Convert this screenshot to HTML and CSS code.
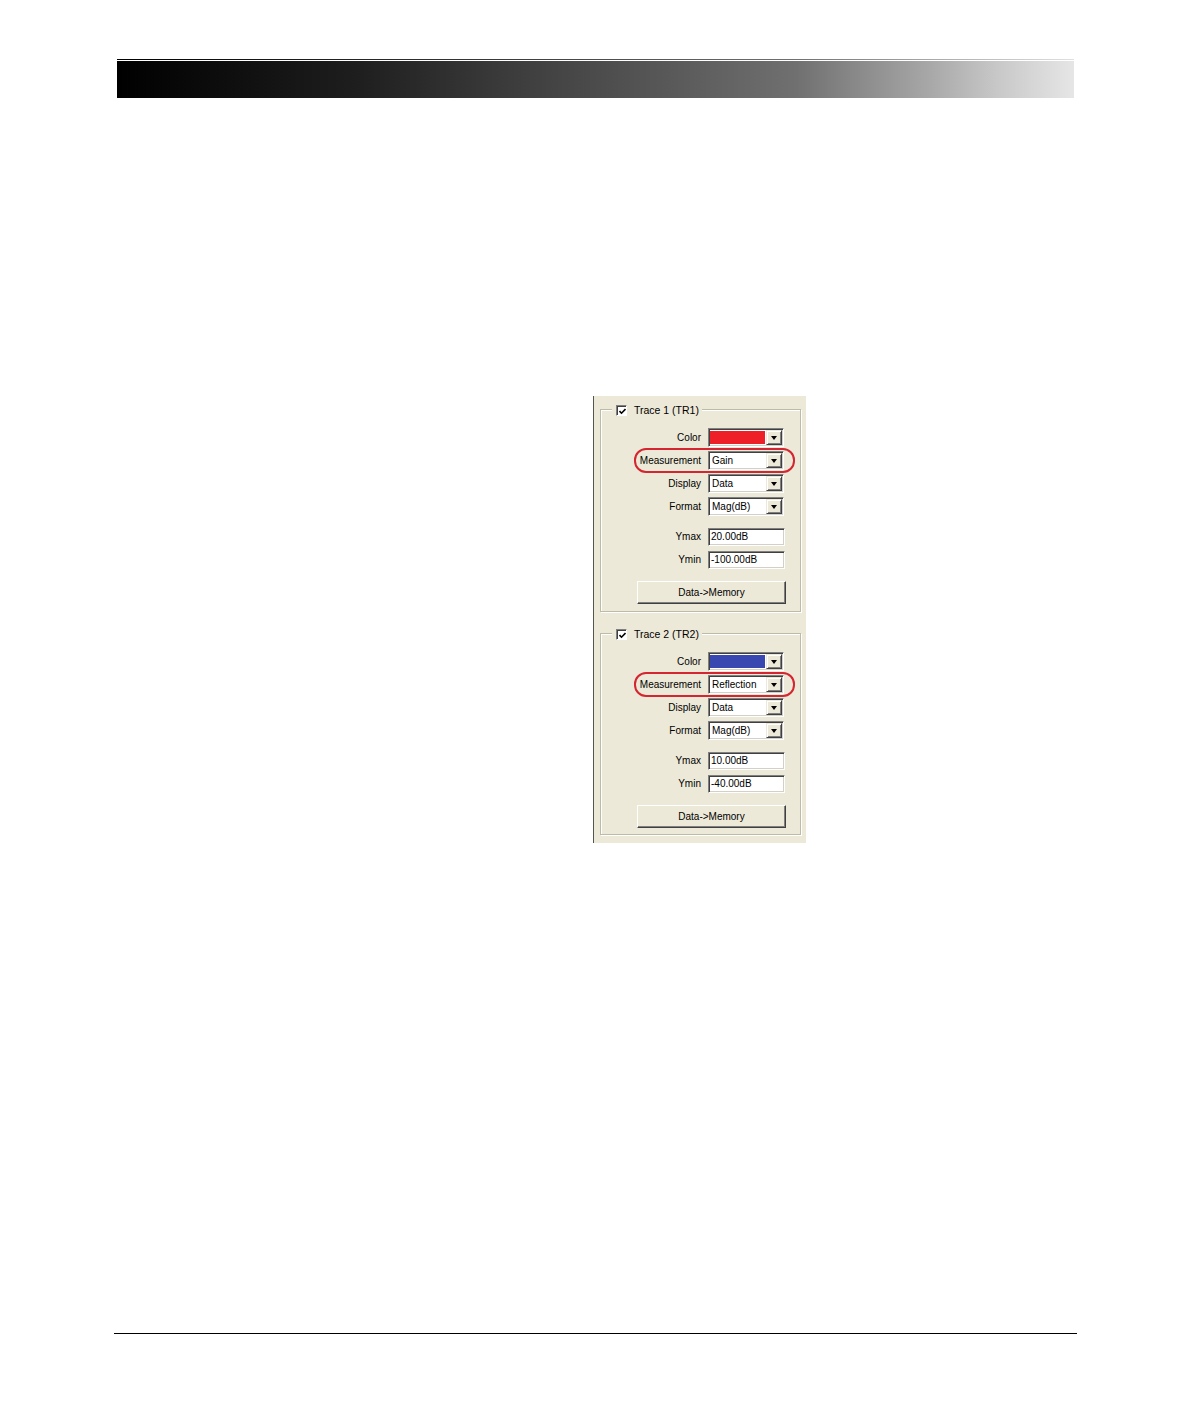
FILE: index.html
```html
<!DOCTYPE html>
<html>
<head>
<meta charset="utf-8">
<link rel="stylesheet" href="styles.css">
</head>
<body>
<div class="page">
  <div class="header">
    <div class="header-line"></div>
    <div class="header-bar"></div>
  </div>

  <div class="panel">
    <div class="group">
      <div class="legend">
        <span class="check"><svg width="7" height="7" viewBox="0 0 7 7"><polyline points="0.5,3 2.5,5.2 6.5,1" fill="none" stroke="#000" stroke-width="1.6"/></svg></span>
        <span class="legend-text">Trace 1 (TR1)</span>
      </div>
      <div class="highlight"></div>
      <div class="rows">
        <div class="label">Color</div>
        <div class="combo"><span class="combo-value swatch red"></span><span class="arrow"></span></div>
        <div class="label">Measurement</div>
        <div class="combo"><span class="combo-value">Gain</span><span class="arrow"></span></div>
        <div class="label">Display</div>
        <div class="combo"><span class="combo-value">Data</span><span class="arrow"></span></div>
        <div class="label">Format</div>
        <div class="combo"><span class="combo-value">Mag(dB)</span><span class="arrow"></span></div>
      </div>
      <div class="rows fields">
        <div class="label">Ymax</div>
        <div class="field">20.00dB</div>
        <div class="label">Ymin</div>
        <div class="field">-100.00dB</div>
      </div>
      <div class="button">Data-&gt;Memory</div>
    </div>

    <div class="group second">
      <div class="legend">
        <span class="check"><svg width="7" height="7" viewBox="0 0 7 7"><polyline points="0.5,3 2.5,5.2 6.5,1" fill="none" stroke="#000" stroke-width="1.6"/></svg></span>
        <span class="legend-text">Trace 2 (TR2)</span>
      </div>
      <div class="highlight"></div>
      <div class="rows">
        <div class="label">Color</div>
        <div class="combo"><span class="combo-value swatch blue"></span><span class="arrow"></span></div>
        <div class="label">Measurement</div>
        <div class="combo"><span class="combo-value">Reflection</span><span class="arrow"></span></div>
        <div class="label">Display</div>
        <div class="combo"><span class="combo-value">Data</span><span class="arrow"></span></div>
        <div class="label">Format</div>
        <div class="combo"><span class="combo-value">Mag(dB)</span><span class="arrow"></span></div>
      </div>
      <div class="rows fields">
        <div class="label">Ymax</div>
        <div class="field">10.00dB</div>
        <div class="label">Ymin</div>
        <div class="field">-40.00dB</div>
      </div>
      <div class="button">Data-&gt;Memory</div>
    </div>
  </div>

  <div class="footer-line"></div>
</div>
</body>
</html>
```

FILE: styles.css
```css
html, body {
  margin: 0;
  padding: 0;
  background: #ffffff;
}

.page {
  width: 1190px;
  height: 1418px;
  overflow: hidden;
  font-family: "Liberation Sans", Arial, sans-serif;
  color: #000;
}

.header {
  margin: 59px 0 0 117px;
  width: 957px;
}

.header-line {
  height: 1px;
  background: linear-gradient(to right, #000 0%, #3a3a3a 40%, #707070 71%, #a8a8a8 85%, #e0e0e0 100%);
}

.header-bar {
  margin-top: 1px;
  height: 37px;
  background: linear-gradient(to right, #000 0%, #1e1e1e 25%, #3a3a3a 40%, #707070 71%, #a8a8a8 85%, #c8c8c8 92%, #e6e6e6 100%);
}

.panel {
  margin: 298px 0 0 593px;
  width: 213px;
  height: 447px;
  box-sizing: border-box;
  border-left: 1px solid #555550;
  background: #ECE9D8;
  padding: 13px 0 0 6px;
}

.group {
  position: relative;
  box-sizing: border-box;
  width: 201px;
  height: 203px;
  border: 1px solid #BDBAA8;
  box-shadow: inset 1px 1px 0 #fff, 1px 1px 0 #fff;
  padding-top: 18px;
}

.group.second {
  margin-top: 21px;
  height: 202px;
}

.legend {
  position: absolute;
  left: 11px;
  top: -6px;
  height: 13px;
  padding: 0 3px 0 4px;
  background: #ECE9D8;
  display: flex;
  align-items: center;
  gap: 7px;
}

.check {
  box-sizing: border-box;
  width: 11px;
  height: 11px;
  background: #fff;
  border-top: 1px solid #808080;
  border-left: 1px solid #808080;
  border-right: 1px solid #fff;
  border-bottom: 1px solid #fff;
  box-shadow: inset 1px 1px 0 #404040;
  display: flex;
  align-items: center;
  justify-content: center;
}

.check svg {
  display: block;
  margin: 1px 0 0 1px;
}

.legend-text {
  font-size: 10.5px;
  line-height: 13px;
}

.highlight {
  position: absolute;
  left: 33px;
  top: 38px;
  width: 161px;
  height: 25px;
  box-sizing: border-box;
  border: 2px solid #D42530;
  border-radius: 12px;
  pointer-events: none;
}

.rows {
  display: grid;
  grid-template-columns: 1fr 76px;
  column-gap: 7px;
  row-gap: 4px;
  margin-right: 16px;
  grid-auto-rows: 19px;
}

.rows.fields {
  margin-top: 12px;
  row-gap: 5px;
  grid-auto-rows: 18px;
}

.label {
  font-size: 10px;
  text-align: right;
  align-self: center;
  line-height: 12px;
  white-space: nowrap;
}

.combo {
  box-sizing: border-box;
  display: flex;
  align-items: stretch;
  background: #fff;
  border-top: 1px solid #808080;
  border-left: 1px solid #808080;
  border-right: 1px solid #fff;
  border-bottom: 1px solid #fff;
  box-shadow: inset 1px 1px 0 #404040, inset -1px -1px 0 #D4D0C8;
  padding: 1px;
}

.combo-value {
  flex: 1;
  font-size: 10px;
  line-height: 15px;
  padding-left: 2px;
}

.swatch {
  margin: 1px 1px 1px 0;
  padding: 0;
}

.swatch.red {
  background: #EE1F27;
}

.swatch.blue {
  background: #3848B0;
}

.arrow {
  position: relative;
  box-sizing: border-box;
  width: 16px;
  background: #ECE9D8;
  border-top: 1px solid #ECE9D8;
  border-left: 1px solid #ECE9D8;
  border-right: 1px solid #404040;
  border-bottom: 1px solid #404040;
  box-shadow: inset 1px 1px 0 #fff, inset -1px -1px 0 #808080;
}

.arrow::after {
  content: "";
  position: absolute;
  left: 3.5px;
  top: 5px;
  border-left: 3.5px solid transparent;
  border-right: 3.5px solid transparent;
  border-top: 4px solid #000;
}

.field {
  box-sizing: border-box;
  width: 77px;
  background: #fff;
  border-top: 1px solid #808080;
  border-left: 1px solid #808080;
  border-right: 1px solid #fff;
  border-bottom: 1px solid #fff;
  box-shadow: inset 1px 1px 0 #404040, inset -1px -1px 0 #D4D0C8;
  font-size: 10px;
  line-height: 16px;
  padding-left: 2px;
}

.button {
  box-sizing: border-box;
  margin: 12px 0 0 36px;
  width: 149px;
  height: 23px;
  background: #ECE9D8;
  border-top: 1px solid #fff;
  border-left: 1px solid #fff;
  border-right: 1px solid #404040;
  border-bottom: 1px solid #404040;
  box-shadow: inset -1px -1px 0 #808080;
  font-size: 10px;
  line-height: 21px;
  text-align: center;
}

.footer-line {
  margin: 490px 0 0 114px;
  width: 963px;
  height: 1px;
  background: #000;
}
```
